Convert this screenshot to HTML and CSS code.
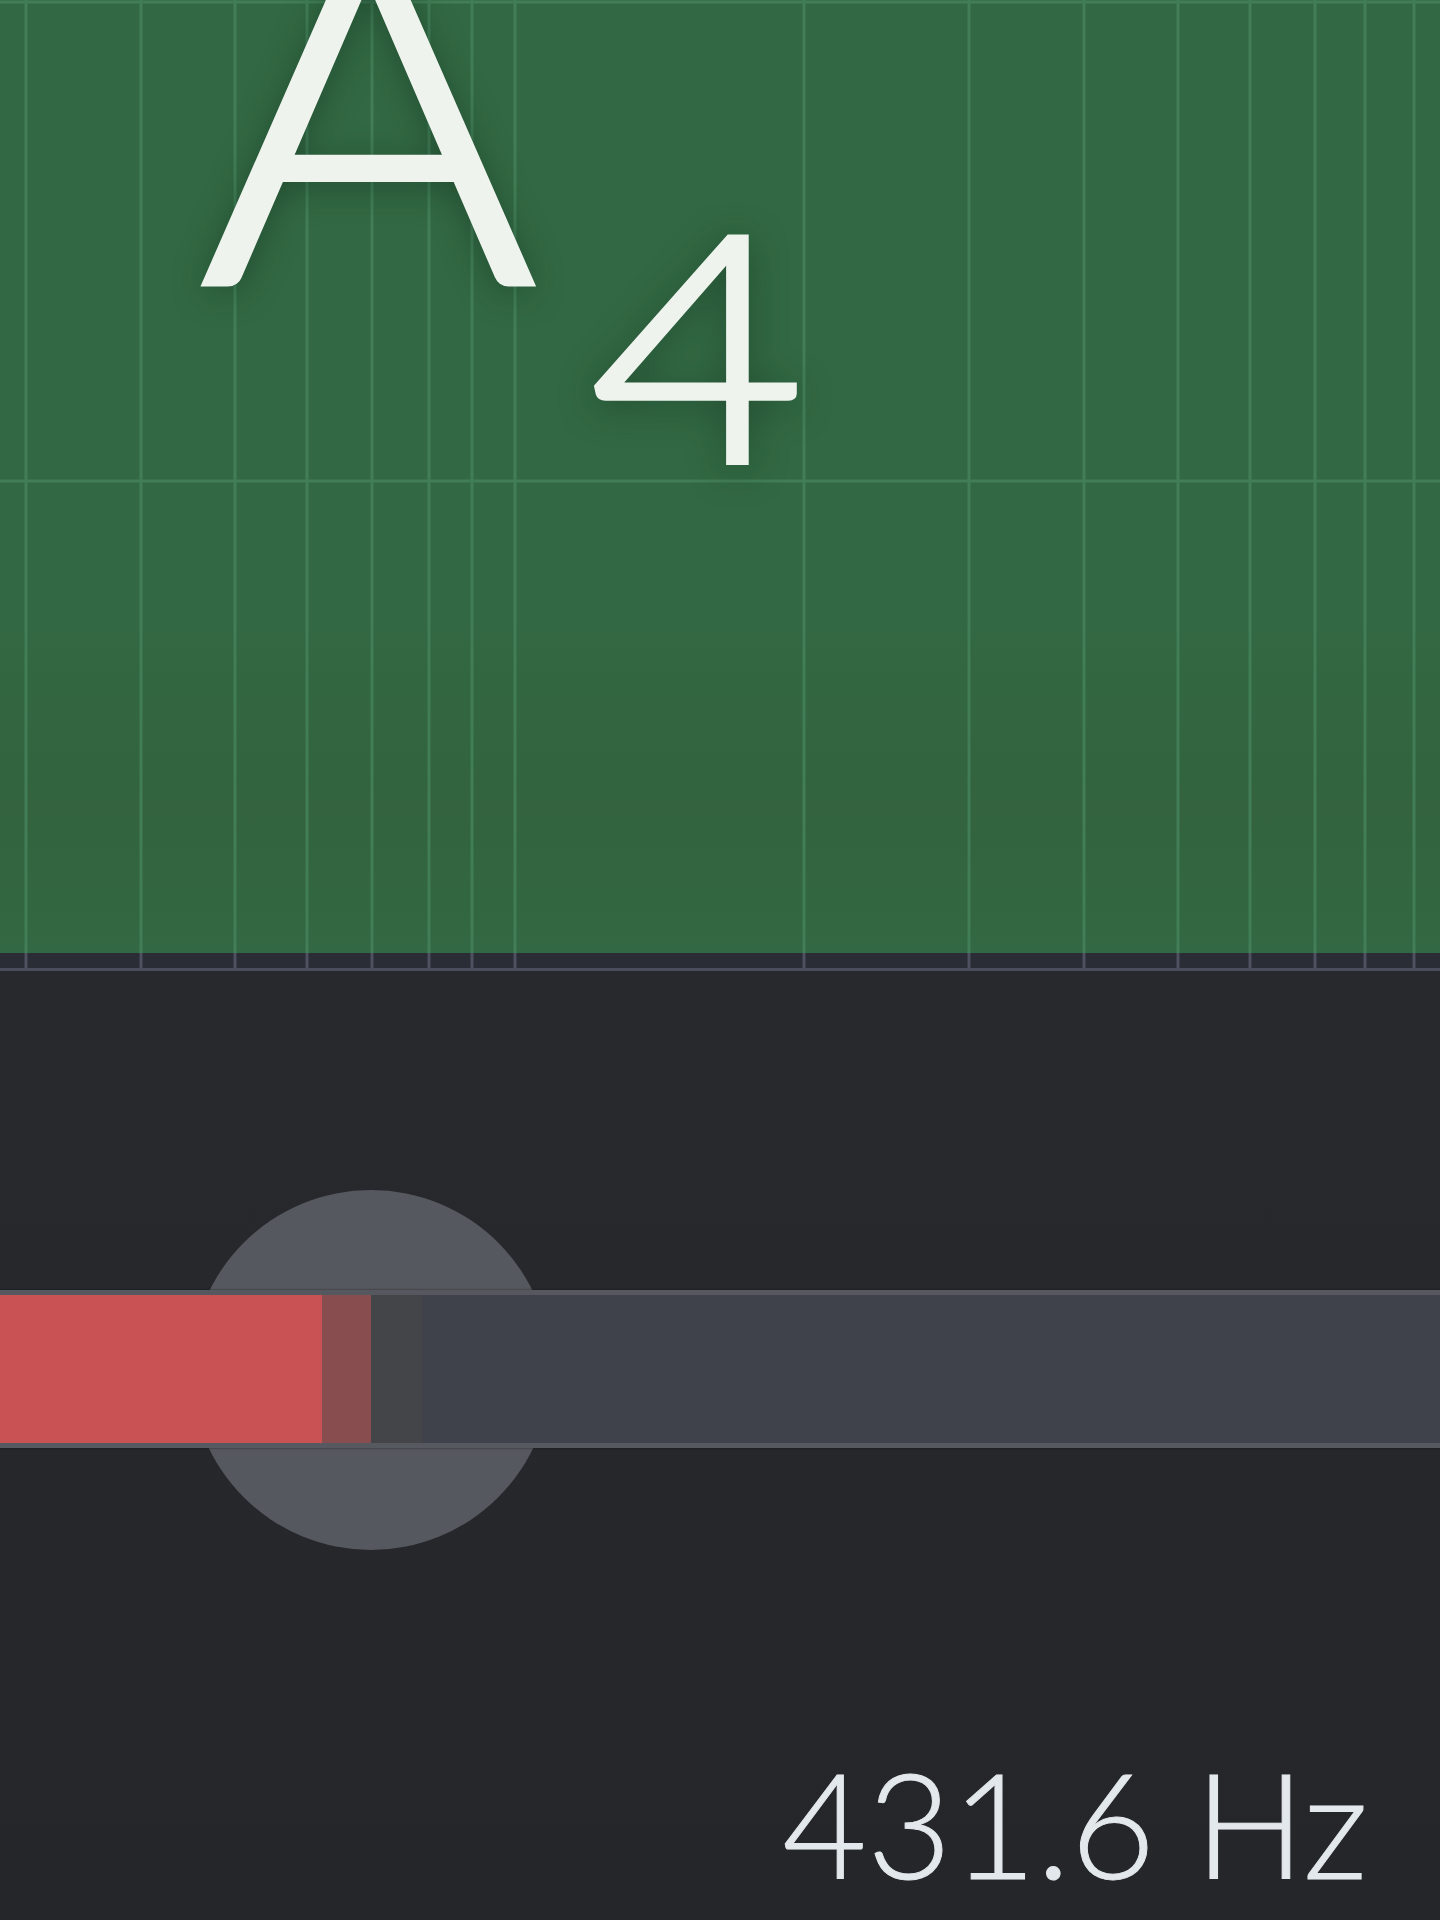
FILE: index.html
```html
<!DOCTYPE html>
<html lang="en">
<head>
    <meta charset="UTF-8">
    <meta name="viewport" content="width=device-width, initial-scale=1.0">
    <title>Tuner</title>
    <link rel="stylesheet" href="styles.css">
</head>
<body>
    <div class="tuner">
        <!-- Pitch display -->
        <div class="scope">
            <svg class="grid" width="100%" height="100%">
                <defs>
                    <g id="ticks">
                        <line x1="26" x2="26" y1="0" y2="100%"/>
                        <line x1="141" x2="141" y1="0" y2="100%"/>
                        <line x1="235" x2="235" y1="0" y2="100%"/>
                        <line x1="307" x2="307" y1="0" y2="100%"/>
                        <line x1="372" x2="372" y1="0" y2="100%"/>
                        <line x1="429" x2="429" y1="0" y2="100%"/>
                        <line x1="472" x2="472" y1="0" y2="100%"/>
                        <line x1="515" x2="515" y1="0" y2="100%"/>
                        <line x1="804" x2="804" y1="0" y2="100%"/>
                        <line x1="969" x2="969" y1="0" y2="100%"/>
                        <line x1="1084" x2="1084" y1="0" y2="100%"/>
                        <line x1="1178" x2="1178" y1="0" y2="100%"/>
                        <line x1="1250" x2="1250" y1="0" y2="100%"/>
                        <line x1="1315" x2="1315" y1="0" y2="100%"/>
                        <line x1="1365" x2="1365" y1="0" y2="100%"/>
                        <line x1="1414" x2="1414" y1="0" y2="100%"/>
                    </g>
                </defs>
                <line class="grid-line" x1="0" x2="100%" y1="2" y2="2"/>
                <line class="grid-line" x1="0" x2="100%" y1="481" y2="481"/>
                <use class="grid-line" href="#ticks"/>
            </svg>
            <div class="note">
                <span class="note-name">A</span><span class="note-octave">4</span>
            </div>
        </div>
        <div class="ruler">
            <svg class="grid" width="100%" height="100%">
                <use class="tick-line" href="#ticks"/>
            </svg>
        </div>

        <!-- Cents slider -->
        <div class="controls">
            <div class="slider">
                <div class="thumb"></div>
                <div class="track">
                    <div class="fill"></div>
                </div>
                <div class="thumb-grip"></div>
            </div>
            <div class="readout">431.6 Hz</div>
        </div>
    </div>
</body>
</html>
```

FILE: styles.css
```css
body {
    margin: 0;
    background-color: #27292d;
    font-family: Lato, "Open Sans", sans-serif;
}
.tuner {
    width: 1440px;
    height: 1920px;
    overflow: hidden;
    background: linear-gradient(#2a2c31, #25262a);
}
.scope {
    position: relative;
    height: 953px;
    overflow: hidden;
    background: linear-gradient(#326843 0%, #326843 65%, #33633f 85%, #326843 100%);
}
.grid {
    position: absolute;
    top: 0;
    left: 0;
}
.grid-line {
    stroke: #417d57;
    stroke-width: 3;
}
.note {
    position: relative; /* sits above the grid */
    margin-top: -141px;
    padding-left: 201px;
    color: #eef3ee;
    font-weight: 300;
    line-height: 1;
    white-space: nowrap;
    text-shadow: 0 6px 34px rgba(12, 40, 22, 0.55);
}
.note-name,
.note-octave {
    display: inline-block;
    transform-origin: left center;
}
.note-name {
    font-size: 477px;
    transform: scaleX(1.07);
    -webkit-text-stroke: 9px #eef3ee;
}
.note-octave {
    font-size: 317px;
    vertical-align: -180px;
    margin-left: 76px;
    transform: scaleX(1.17);
    -webkit-text-stroke: 6px #eef3ee;
}
.ruler {
    position: relative;
    height: 15px;
    background-color: #2a2d35;
    border-bottom: 3px solid #4a4e5c;
}
.tick-line {
    stroke: #4d5160;
    stroke-width: 3;
}
.controls {
    padding-top: 319px;
}
.slider {
    position: relative;
    height: 158px;
}
.thumb {
    position: absolute;
    left: 191px;
    top: -100px;
    width: 360px;
    height: 360px;
    border-radius: 50%;
    background-color: #55585e;
}
.track {
    position: relative;
    height: 148px;
    border-top: 5px solid #55585f;
    border-bottom: 5px solid #56595f;
    background-color: #3f424b;
    box-shadow: 0 0 2px rgba(0, 0, 0, 0.5);
}
.fill {
    width: 371px;
    height: 100%;
    background-color: #c95254;
}
.thumb-grip {
    position: absolute;
    left: 322px;
    top: 5px;
    width: 100px;
    height: 148px;
    background-color: rgba(71, 71, 71, 0.5);
}
.readout {
    margin-top: 302px;
    padding-right: 72px;
    text-align: right;
    color: #e3e8ec;
    font-size: 146px;
    font-weight: 300;
    line-height: 1;
    -webkit-text-stroke: 1px #e3e8ec;
}
```
